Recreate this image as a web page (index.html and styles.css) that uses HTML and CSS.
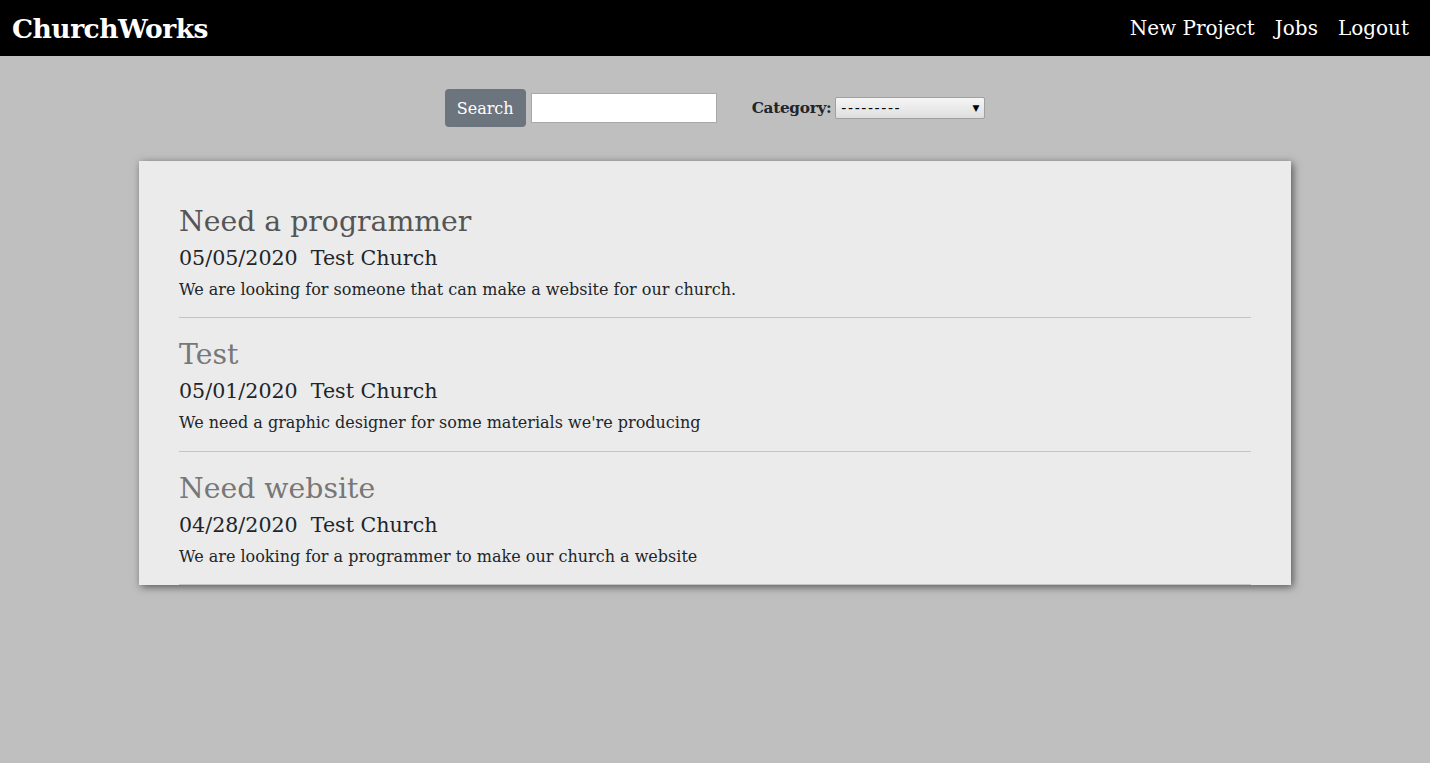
FILE: index.html
```html
<!DOCTYPE html>
<html>
<head>
<meta charset="utf-8">
<link rel="stylesheet" href="styles.css">
</head>
<body>
<nav class="navbar">
  <a class="brand" href="#">ChurchWorks</a>
  <div class="nav-links">
    <a href="#">New Project</a>
    <a href="#">Jobs</a>
    <a href="#">Logout</a>
  </div>
</nav>
<form class="search-form">
  <button type="button" class="btn-search">Search</button>
  <input type="text" class="search-input">
  <label class="cat-label">Category:</label>
  <div class="select"><span>---------</span><span class="arrow">▼</span></div>
</form>
<main class="card">
  <div class="item">
    <a class="title dark" href="#">Need a programmer</a>
    <div class="meta">05/05/2020&nbsp; Test Church</div>
    <p class="desc">We are looking for someone that can make a website for our church.</p>
  </div>
  <div class="item">
    <a class="title" href="#">Test</a>
    <div class="meta">05/01/2020&nbsp; Test Church</div>
    <p class="desc">We need a graphic designer for some materials we're producing</p>
  </div>
  <div class="item">
    <a class="title" href="#">Need website</a>
    <div class="meta">04/28/2020&nbsp; Test Church</div>
    <p class="desc">We are looking for a programmer to make our church a website</p>
  </div>
</main>
</body>
</html>
```
FILE: styles.css
```css
* { box-sizing: border-box; }
html, body { margin: 0; padding: 0; }
body {
  background: #bfbfbf;
  font-family: "DejaVu Serif", "Liberation Serif", serif;
  color: #212529;
  height: 763px;
}
.navbar {
  background: #000;
  height: 56px;
  display: flex;
  align-items: center;
  justify-content: space-between;
  padding: 0 21px 0 12px;
}
.navbar a { color: #fff; text-decoration: none; }
.brand { font-weight: bold; font-size: 26.5px; letter-spacing: -0.5px; }
.nav-links { display: flex; gap: 20px; font-size: 20px; }
.search-form {
  display: flex;
  justify-content: center;
  align-items: center;
  margin-top: 33px;
  height: 38px;
}
.btn-search {
  background: #6c757d;
  color: #fff;
  border: none;
  border-radius: 4px;
  font-family: inherit;
  font-size: 16px;
  width: 81px;
  height: 38px;
  padding: 0;
}
.search-input {
  width: 186px;
  height: 30px;
  margin-left: 5px;
  border: 1px solid #a9a9a9;
  background: #fff;
}
.cat-label {
  margin-left: 35px;
  font-weight: bold;
  font-size: 15.3px;
  letter-spacing: -0.3px;
}
.select {
  margin-left: 4px;
  width: 150px;
  height: 22px;
  border: 1px solid #a0a0a0;
  border-radius: 2px;
  background: linear-gradient(#f6f6f6, #dedede);
  display: flex;
  align-items: center;
  justify-content: space-between;
  padding: 0 5px 0 5px;
  font-family: "DejaVu Sans", sans-serif;
  font-size: 14px;
  letter-spacing: 1.6px;
  color: #000;
}
.select .arrow { font-size: 9px; letter-spacing: 0; }
.card {
  width: 1152px;
  margin: 34px auto 0;
  background: #ebebeb;
  box-shadow: 2px 2px 8px rgba(0,0,0,0.55);
  padding: 40px 40px 0;
  height: 424px;
  overflow: hidden;
}
.item {
  border-bottom: 1px solid #c4c4c4;
  height: 134px;
}
.item:first-child { height: 117px; padding-top: 3px; }
.item + .item { padding-top: 19px; }
.item:last-child { height: 133px; }
.title {
  display: block;
  font-size: 28.3px;
  color: #777;
  text-decoration: none;
  line-height: 36px;
}
.title.dark { color: #555; }
.meta { font-size: 20.6px; line-height: 30px; margin-top: 3px; }
.desc { font-size: 16px; margin: 6px 0 0; line-height: 22px; }
```
